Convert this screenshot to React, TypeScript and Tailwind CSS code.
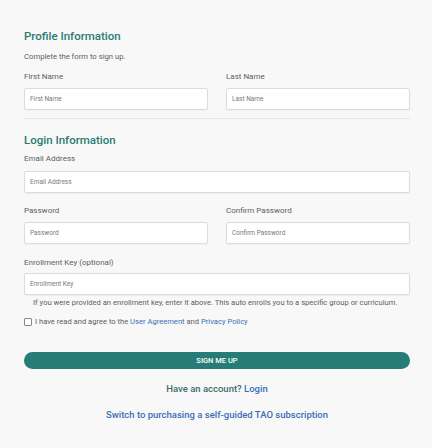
import React from "react";

function Field({
  label,
  placeholder,
  labelGap = "mt-[6px]",
}: {
  label: string;
  placeholder: string;
  labelGap?: string;
}) {
  return (
    <div className="flex flex-col">
      <label className="text-[8px] leading-[10px] text-[#5e5e5e]">{label}</label>
      <input
        className={`${labelGap} h-[22px] w-full rounded-[2px] border border-[#dcdcdc] bg-white px-[5px] text-[6.5px] text-[#555] shadow-[0_1px_1px_rgba(0,0,0,0.04)] outline-none placeholder:text-[#7a7a7a]`}
        placeholder={placeholder}
      />
    </div>
  );
}

export default function App() {
  return (
    <div
      className="min-h-[448px] w-[432px] bg-[#f8f8f8] pl-6 pr-[22px] pt-[28px]"
      style={{ fontFamily: "Roboto, 'Liberation Sans', sans-serif" }}
    >
      {/* PROFILE */}
      <h2 className="text-[11.5px] leading-[16px] font-medium text-[#2b7a74]">
        Profile Information
      </h2>
      <p className="mt-[8px] text-[7.7px] leading-[10px] text-[#5e5e5e]">
        Complete the form to sign up.
      </p>
      <div className="mt-[10px] grid grid-cols-[184px_1fr] gap-x-[18px]">
        <Field label="First Name" placeholder="First Name" />
        <Field label="Last Name" placeholder="Last Name" />
      </div>

      <div className="mt-[8px] h-px w-full bg-[#e6e6e6]" />

      {/* LOGIN */}
      <h2 className="mt-[13px] text-[11.5px] leading-[16px] font-medium text-[#2b7a74]">
        Login Information
      </h2>
      <div className="mt-[6px]">
        <Field label="Email Address" placeholder="Email Address" labelGap="mt-[7px]" />
      </div>
      <div className="mt-[13px] grid grid-cols-[184px_1fr] gap-x-[18px]">
        <Field label="Password" placeholder="Password" />
        <Field label="Confirm Password" placeholder="Confirm Password" />
      </div>
      <div className="mt-[14px]">
        <Field
          label="Enrollment Key (optional)"
          placeholder="Enrollment Key"
          labelGap="mt-[5px]"
        />
      </div>
      <p className="mt-[3px] pl-[9px] text-[7.6px] leading-[10px] text-[#5e5e5e]">
        If you were provided an enrollment key, enter it above. This auto enrolls
        you to a specific group or curriculum.
      </p>

      <label className="mt-[9px] flex items-center gap-[3px] text-[7.6px] leading-[10px] text-[#5e5e5e]">
        <span className="h-[8px] w-[8px] shrink-0 rounded-[1px] border border-[#888] bg-white" />
        <span>
          I have read and agree to the{" "}
          <a className="text-[#3a6fb5]">User Agreement</a> and{" "}
          <a className="text-[#3a6fb5]">Privacy Policy</a>
        </span>
      </label>

      <button
        type="button"
        className="mt-[25px] flex h-[17px] w-full items-center justify-center rounded-full bg-[#267c77] text-[7.5px] font-medium text-white"
      >
        SIGN ME UP
      </button>

      <p className="mt-[14px] text-center text-[9.5px] leading-[12px] font-medium text-[#3e6d6b]">
        Have an account? <a className="text-[#3a6fb5]">Login</a>
      </p>
      <p className="mt-[14px] text-center text-[9.5px] leading-[12px] font-medium text-[#3a6fb5]">
        Switch to purchasing a self-guided TAO subscription
      </p>
    </div>
  );
}
